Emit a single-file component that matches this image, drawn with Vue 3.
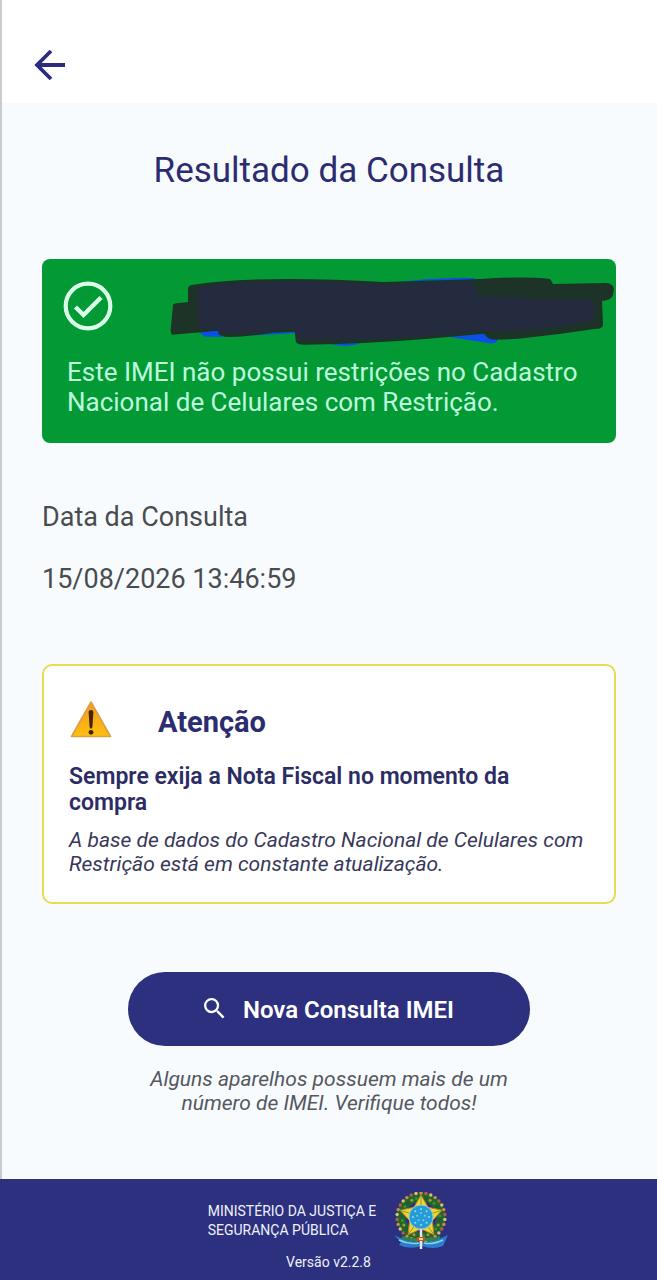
<template>
    <div class="page">
        <header class="top-bar">
            <button class="back" type="button" aria-label="Voltar">
                <svg viewBox="0 0 32 32" width="32" height="32">
                    <path d="M31 16H3M17 2 3 16l14 14" fill="none" stroke="#2c2c7c" stroke-width="3.8" />
                </svg>
            </button>
        </header>

        <main class="content">
            <h1>Resultado da Consulta</h1>

            <section class="result">
                <div class="result-head">
                    <svg class="check" viewBox="0 0 50 50" width="50" height="50">
                        <circle cx="25" cy="25" r="22.3" fill="none" stroke="#d9ffe8" stroke-width="4.2" />
                        <path d="M12.5 26 20.5 34 38 16.5" fill="none" stroke="#d9ffe8" stroke-width="4.4" />
                    </svg>
                    <!-- IMEI coberto -->
                    <svg class="scribble" viewBox="0 0 448 72">
                        <path d="M25 54 36 62H60L132 58 158 68Q176 75 196 67L280 62 318 68Q330 71 330 62L310 48 312 10 306 3Q265 2 215 9Z" fill="#0a50e6" />
                        <path d="M3 60Q1 58 2 51L4 30Q5 28 10 28L19 27 19 14Q19 11 23 10Q60 4 120 4Q165 4 215 7L312 4Q355 1 382 4L385 9 437 8Q445 8 446 14L445 20Q444 25 434 26L435 50Q434 54 428 54Q390 60 350 64L326 65Q319 65 316 59L260 64Q200 69 136 70Q127 70 127 66L126 57 104 58Q70 63 56 62L50 60 49 56Z" fill="#1d3327" />
                        <path d="M28 17Q31 10 60 9Q130 3 215 10L303 6 311 21Q370 25 422 24Q428 30 427 38L423 46Q370 57 312 56Q240 65 130 65L126 54 60 59 30 52Z" fill="#252b3f" />
                    </svg>
                </div>
                <p>Este IMEI não possui restrições no Cadastro Nacional de Celulares com Restrição.</p>
            </section>

            <dl class="date">
                <dt>Data da Consulta</dt>
                <dd>{{ date }}</dd>
            </dl>

            <section class="warning">
                <div class="warning-head">
                    <svg viewBox="0 0 42 38" width="42" height="38">
                        <defs>
                            <linearGradient id="amber" x1="0" y1="0" x2="0" y2="1">
                                <stop offset="0" stop-color="#f79a1c" />
                                <stop offset="1" stop-color="#fcc010" />
                            </linearGradient>
                        </defs>
                        <path d="M21 2 40.5 36.5H1.500Z" fill="url(#amber)" stroke="#dba045" stroke-width="1.600" stroke-linejoin="round" />
                        <path d="M18.600 12Q18.600 10 21 10T23.400 12L22.400 27Q22.200 28.500 21 28.500T19.600 27Z" fill="#40260f" />
                        <circle cx="21" cy="32.300" r="2.400" fill="#40260f" />
                    </svg>
                    <h2>Atenção</h2>
                </div>
                <h3>Sempre exija a Nota Fiscal no momento da compra</h3>
                <p>A base de dados do Cadastro Nacional de Celulares com Restrição está em constante atualização.</p>
            </section>

            <button class="new-search" type="button">
                <svg viewBox="3 3 18 18" width="21" height="21">
                    <path fill="#fff" d="M15.500 14h-.79l-.28-.27A6.471 6.471 0 0 0 16 9.500 6.500 6.500 0 1 0 9.500 16c1.610 0 3.090-.59 4.230-1.570l.27.28v.79l5 4.990L20.490 19l-4.990-5zm-6 0C7.010 14 5 11.990 5 9.500S7.010 5 9.500 5 14 7.010 14 9.500 11.990 14 9.500 14z" />
                </svg>
                <span>Nova Consulta IMEI</span>
            </button>
            <p class="hint">Alguns aparelhos possuem mais de um número de IMEI. Verifique todos!</p>
        </main>

        <footer class="footer">
            <div class="ministry">
                <span>MINISTÉRIO DA JUSTIÇA E<br>SEGURANÇA PÚBLICA</span>
                <svg viewBox="0 0 56 58" width="56" height="58">
                    <circle cx="28" cy="25" r="20" fill="none" stroke="#23652f" stroke-width="9" />
                    <circle v-for="(b, i) in beads" :key="'b' + i" :cx="b.x" :cy="b.y" r="1.700" :fill="b.color" />
                    <circle v-for="(b, i) in leaves" :key="'l' + i" :cx="b.x" :cy="b.y" r="1.500" :fill="b.color" />
                    <path d="M1 43Q14 50 28 50T55 43L50 54Q40 58 29 54Q16 58 6 53L8 50Z" fill="#287dcc" />
                    <path d="M6 48Q16 53 26 51M50 48Q40 53 31 51" fill="none" stroke="#8bd3df" stroke-width="1.500" />
                    <path d="M9 45Q17 49 25 47M47 45Q39 49 31 47" fill="none" stroke="#2d8640" stroke-width="3" />
                    <polygon :points="star(22, 12)" fill="#efd532" stroke="#c3782a" stroke-width="1" />
                    <path d="M28 25V4M28 25 48 18.500M28 25 40.500 42M28 25 15.500 42M28 25 8 18.500" stroke="#8f9c2c" stroke-width="1" />
                    <circle cx="28" cy="25" r="12" fill="#269bd8" stroke="#86cfcc" stroke-width="1" />
                    <circle v-for="(b, i) in sky" :key="'s' + i" :cx="b.x" :cy="b.y" r="1" :fill="b.color" />
                    <path d="M28 37V57" stroke="#e9e8d8" stroke-width="2.500" />
                    <path d="M24 45H32V49H24Z" fill="#cf4b34" />
                    <path d="M26 47H30" stroke="#f3dc58" stroke-width="2" />
                </svg>
            </div>
            <div class="version">Versão v2.2.8</div>
        </footer>
    </div>
</template>

<script setup>
    import { ref } from 'vue'

    const date = ref('15/08/2026 13:46:59');

    // pontos distribuídos em círculo no brasão
    const ring = (count, radius, colors)=>{
        return Array.from({ length: count }, (_, i)=>{
            const a = i * 2 * Math.PI / count;
            return {
                x: 28 + radius * Math.sin(a),
                y: 25 - radius * Math.cos(a),
                color: colors[i % colors.length],
            }
        })
    };

    const beads = ring(30, 24, ['#d58b45', '#b0603e', '#dcc16c']);
    const leaves = ring(25, 19, ['#398f36', '#195d32', '#a39a32']);
    const sky = [...ring(8, 8, ['#8ae3e8']), ...ring(5, 4, ['#6bd5e9'])];

    const star = (outer, inner)=>{
        return Array.from({ length: 10 }, (_, i)=>{
            const r = i % 2 ? inner : outer;
            const a = i * Math.PI / 5;
            return `${28 + r * Math.sin(a)},${25 - r * Math.cos(a)}`
        }).join(' ')
    };
</script>

<style>
    body{
        margin: 0;
        background: #f8fbfe;
    }
</style>

<style scoped>
    .page{
        display: flex;
        flex-direction: column;
        min-height: 100vh;
        font-family: Roboto, "Liberation Sans", sans-serif;
        color: #2c2c64;
    }
    h1, h2, h3, p, dl, dd{
        margin: 0;
    }
    button{
        border: 0;
        font-family: inherit;
        cursor: pointer;
    }
    svg{
        display: block;
        flex-shrink: 0;
    }
    .top-bar{
        display: flex;
        padding: 49px 32px 22px;
        background: #fff;
        border-left: 2px solid #cbcbcf;
    }
    .back{
        padding: 0;
        background: none;
    }
    .content{
        flex: 1;
        display: flex;
        flex-direction: column;
        padding: 46px 41px 60px 40px;
        border-left: 2px solid #cbcbcf;
    }
    h1{
        font-size: 35px;
        line-height: 44px;
        font-weight: 400;
        text-align: center;
        color: #2c2c70;
    }
    .result{
        margin-top: 66px;
        padding: 16px 0 26px;
        border-radius: 8px;
        background: #039a35;
        color: #bdfbdc;
    }
    .result-head{
        display: flex;
        align-items: flex-start;
        padding-left: 21px;
    }
    .check{
        margin-top: 6px;
    }
    .scribble{
        flex: 1;
        min-width: 0;
        margin-left: 56px;
    }
    .result p{
        padding: 10px 24px 0 25px;
        font-size: 26px;
        line-height: 30px;
    }
    .date{
        display: flex;
        flex-direction: column;
        gap: 30px;
        margin-top: 58px;
        font-size: 27px;
        line-height: 32px;
        color: #4a4d50;
    }
    .warning{
        margin-top: 69px;
        padding: 34px 24px 26px 25px;
        border: 2px solid #e8dc50;
        border-radius: 10px;
        background: #fff;
    }
    .warning-head{
        display: flex;
        align-items: flex-start;
        gap: 46px;
        padding-left: 1px;
    }
    h2{
        font-size: 29px;
        line-height: 44px;
        font-weight: 700;
        color: #2c2c70;
    }
    h3{
        margin-top: 20px;
        font-size: 23px;
        line-height: 26px;
        font-weight: 600;
    }
    .warning p{
        margin-top: 12px;
        font-size: 21px;
        line-height: 24px;
        font-style: italic;
        color: #38385a;
    }
    .new-search{
        align-self: center;
        display: flex;
        align-items: center;
        justify-content: center;
        gap: 18px;
        width: 70%;
        height: 74px;
        margin-top: 68px;
        border-radius: 37px;
        background: #2c307f;
        color: #fff;
        font-size: 24px;
        font-weight: 600;
    }
    .new-search span{
        padding-top: 2px;
    }
    .hint{
        align-self: center;
        max-width: 370px;
        margin-top: 21px;
        font-size: 21px;
        line-height: 24px;
        font-style: italic;
        text-align: center;
        color: #55585e;
    }
    .footer{
        display: flex;
        flex-direction: column;
        align-items: center;
        padding: 13px 0 10px;
        background: #2c307f;
        color: #eef0fb;
        font-size: 14px;
    }
    .ministry{
        display: flex;
        align-items: center;
        gap: 17px;
        line-height: 19px;
    }
    .version{
        margin-top: 4px;
        line-height: 16px;
    }
</style>
